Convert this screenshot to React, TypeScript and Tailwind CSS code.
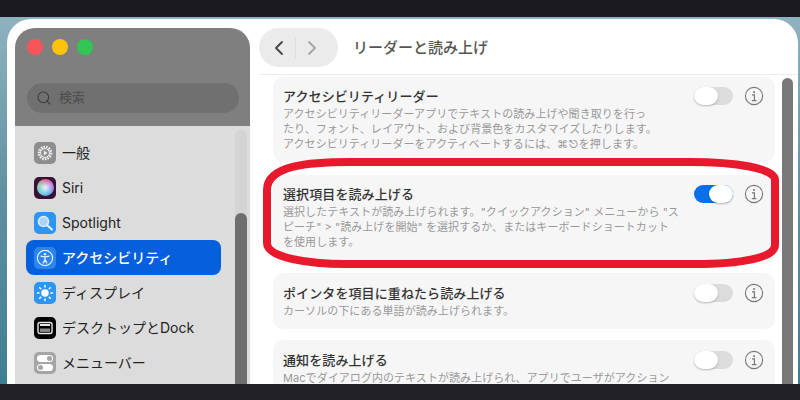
import { ChevronLeft, ChevronRight, Search, Sun } from "lucide-react"

const FONT = "font-['Inter','Noto_Sans_CJK_JP',sans-serif]"

function InfoIcon() {
    return (
        <svg width="20" height="20" viewBox="0 0 20 20" fill="none" stroke="#777" className="shrink-0">
            <circle cx="10" cy="10" r="8.6" strokeWidth="1.1" />
            <circle cx="10" cy="5.9" r="1" fill="#777" stroke="none" />
            <path d="M8 8.8h2.4v5.6M7.8 14.6h4.6" strokeWidth="1.2" />
        </svg>
    )
}

function Toggle({ on = false }: { on?: boolean }) {
    return (
        <div className={`flex h-[18px] w-[39px] items-center rounded-full ${on ? "justify-end bg-[#0a6fe8]" : "justify-start bg-[#dcdcdc]"}`}>
            <div className="h-[18px] w-[24px] rounded-full bg-white shadow-[0_1px_2px_rgba(0,0,0,0.25)]" />
        </div>
    )
}

function SettingCard({ title, lines, on, className }: { title: string; lines: string[]; on?: boolean; className: string }) {
    return (
        <div className={`flex shrink-0 justify-between rounded-[10px] bg-[#f6f6f6] pl-[10px] pr-[11px] ${className}`}>
            <div>
                <div className="h-[22px] text-[13px] leading-[22px] font-medium tracking-[0.1px] whitespace-nowrap text-[#333]">{title}</div>
                {lines.map((line) => (
                    <div key={line} className="text-[11px] leading-[15px] tracking-[0.06px] whitespace-nowrap text-[#999]">{line}</div>
                ))}
            </div>
            <div className="flex h-[22px] items-center gap-[11px]">
                <Toggle on={on} />
                <InfoIcon />
            </div>
        </div>
    )
}

function GearIcon() {
    return (
        <div className="flex h-[22px] w-[22px] items-center justify-center rounded-[5px] bg-[#8e8e8e]">
            <svg width="18" height="18" viewBox="0 0 18 18" fill="none" stroke="#eee">
                <circle cx="9" cy="9" r="6" strokeWidth="2.6" strokeDasharray="1.6 1" />
                <circle cx="9" cy="9" r="4.4" strokeWidth="1" />
                <path d="M7.8 6.4 11.4 9 7.8 11.6Z" fill="#eee" stroke="none" />
            </svg>
        </div>
    )
}

function SiriIcon() {
    return (
        <div className="flex h-[22px] w-[22px] items-center justify-center rounded-[5px] bg-[#3a1036]">
            <div className="h-[17px] w-[17px] rounded-full bg-[conic-gradient(#e0457a,#b85fd0,#3fa0e8,#45d0c8,#7fd08a,#e0457a)]">
                <div className="h-full w-full rounded-full bg-[radial-gradient(circle,#e6f4ff_0%,rgba(200,220,255,0.5)_45%,transparent_75%)]" />
            </div>
        </div>
    )
}

function SpotlightIcon() {
    return (
        <div className="flex h-[22px] w-[22px] items-center justify-center rounded-[5px] bg-[#2f95f5]">
            <svg width="18" height="18" viewBox="0 0 18 18" fill="none">
                <circle cx="7.5" cy="7.5" r="5" fill="#a9d4f7" stroke="#dcecfa" strokeWidth="1.6" />
                <path d="m11.5 11.5 4.4 4" stroke="#e4f0fa" strokeWidth="2.2" strokeLinecap="round" />
            </svg>
        </div>
    )
}

function AccessibilityIcon() {
    return (
        <div className="flex h-[22px] w-[22px] items-center justify-center rounded-[5px] bg-[#2a86ee]">
            <svg width="18" height="18" viewBox="0 0 18 18" fill="none" stroke="#e8f2ff">
                <circle cx="9" cy="9" r="7.6" strokeWidth="1.2" />
                <circle cx="9" cy="5.2" r="1.2" fill="#e8f2ff" stroke="none" />
                <path d="M5 7.2c2.6.8 5.4.8 8 0M9 8v2.6M9 10.6l-1.8 3.4M9 10.6l1.8 3.4" strokeWidth="1.3" strokeLinecap="round" />
            </svg>
        </div>
    )
}

function DisplayIcon() {
    return (
        <div className="flex h-[22px] w-[22px] items-center justify-center rounded-[5px] bg-[#2f95f5]">
            <Sun size={18} color="#fff" fill="#fff" strokeWidth={2} />
        </div>
    )
}

function DockIcon() {
    return (
        <div className="flex h-[22px] w-[22px] items-center justify-center rounded-[5px] bg-black">
            <svg width="16" height="14" viewBox="0 0 16 14">
                <rect x="1" y="1.5" width="14" height="11" rx="2" fill="none" stroke="#e8e8e8" strokeWidth="1.4" />
                <rect x="3" y="3" width="10" height="2" fill="#e8e8e8" />
                <rect x="3" y="7.5" width="10" height="3.4" fill="#8a8a8a" />
            </svg>
        </div>
    )
}

function MenuBarIcon() {
    return (
        <div className="flex h-[22px] w-[22px] flex-col items-center justify-center gap-[2px] rounded-[5px] bg-[#a5a5a5]">
            <div className="flex h-[7px] w-[16px] items-center justify-end rounded-full bg-white pr-[1px]">
                <div className="h-[5px] w-[5px] rounded-full bg-[#a5a5a5]" />
            </div>
            <div className="flex h-[7px] w-[16px] items-center rounded-full bg-white pl-[1px]">
                <div className="h-[5px] w-[5px] rounded-full bg-[#a5a5a5]" />
            </div>
        </div>
    )
}

const SIDEBAR = [
    { label: "一般", icon: <GearIcon /> },
    { label: "Siri", icon: <SiriIcon /> },
    { label: "Spotlight", icon: <SpotlightIcon /> },
    { label: "アクセシビリティ", icon: <AccessibilityIcon />, active: true },
    { label: "ディスプレイ", icon: <DisplayIcon /> },
    { label: "デスクトップとDock", icon: <DockIcon /> },
    { label: "メニューバー", icon: <MenuBarIcon /> },
]

export default function App() {
    return (
        <div className={`relative flex h-[400px] w-[800px] flex-col overflow-hidden bg-[#1b1b20] ${FONT}`}>
            <div className="h-[17px] shrink-0 bg-[#1a1a20]" />
            <div className="flex min-h-0 flex-1 bg-[linear-gradient(180deg,#8fb2bf_0%,#5f8fa0_50%,#3f7f92_100%)] pt-[2px] pl-[7px] pr-[2px]">
                <div className="flex min-w-0 flex-1 gap-[9px] overflow-hidden rounded-t-[24px] bg-white pt-[9px] pl-[8px]">
                    <aside className="flex w-[235px] shrink-0 flex-col overflow-hidden rounded-t-[20px] bg-[#dcdcdc]">
                        <div className="h-[98px] shrink-0 bg-[#7f7f7f] pt-[11px] pl-[12px]">
                            <div className="flex gap-[9px]">
                                <div className="h-[16px] w-[16px] rounded-full bg-[#f9545a]" />
                                <div className="h-[16px] w-[16px] rounded-full bg-[#fcc30b]" />
                                <div className="h-[16px] w-[16px] rounded-full bg-[#2fc653]" />
                            </div>
                            <div className="mt-[28px] mr-[11px] flex h-[30px] items-center gap-[7px] rounded-full bg-[#707070] pl-[9px]">
                                <Search size={16} color="#3e3e3e" strokeWidth={1.6} />
                                <span className="text-[13px] text-[#4c4c4c]">検索</span>
                            </div>
                        </div>
                        <div className="flex min-h-0 flex-1 gap-[14px] pl-[11px]">
                            <div className="flex w-[195px] shrink-0 flex-col pt-[9px]">
                                {SIDEBAR.map((item) => (
                                    <div key={item.label} className={`flex h-[35px] shrink-0 items-center gap-[6px] rounded-[8px] pl-[8px] text-[14px] whitespace-nowrap ${item.active ? "bg-[#0660dc] font-medium text-white" : "text-[#222]"}`}>
                                        {item.icon}
                                        <span>{item.label}</span>
                                    </div>
                                ))}
                            </div>
                            <div className="mt-[4px] mr-[3px] flex w-[12px] flex-col justify-end overflow-hidden rounded-t-full bg-[#d4d4d4] pt-[83px]">
                                <div className="flex-1 rounded-t-full bg-[#6e6e6e]" />
                            </div>
                        </div>
                    </aside>
                    <main className="flex min-w-0 flex-1 flex-col">
                        <header className="flex h-[47px] shrink-0 items-start border-b border-[#ececec]">
                            <div className="flex h-[39px] w-[79px] items-center rounded-full bg-[#ebebeb] pl-[8px]">
                                <ChevronLeft size={24} color="#444" strokeWidth={1.8} />
                                <div className="mx-[4px] h-[20px] w-px bg-[#dcdcdc]" />
                                <ChevronRight size={24} color="#a5a5a5" strokeWidth={1.8} />
                            </div>
                            <h1 className="ml-[15px] text-[15px] leading-[39px] font-medium text-[#555]">リーダーと読み上げ</h1>
                        </header>
                        <div className="flex min-h-0 flex-1 gap-[7px] pl-[14px]">
                            <div className="flex w-[502px] shrink-0 flex-col pt-[2px]">
                                <SettingCard
                                    className="h-[85px] pt-[8px]"
                                    title="アクセシビリティリーダー"
                                    lines={[
                                        "アクセシビリティリーダーアプリでテキストの読み上げや聞き取りを行っ",
                                        "たり、フォント、レイアウト、および背景色をカスタマイズしたりします。",
                                        "アクセシビリティリーダーをアクティベートするには、⌘⎋を押します。",
                                    ]}
                                />
                                <SettingCard
                                    className="mt-[13px] h-[89px] pt-[8px]"
                                    on
                                    title="選択項目を読み上げる"
                                    lines={[
                                        "選択したテキストが読み上げられます。\"クイックアクション\" メニューから \"ス",
                                        "ピーチ\" > \"読み上げを開始\" を選択するか、またはキーボードショートカット",
                                        "を使用します。",
                                    ]}
                                />
                                <SettingCard
                                    className="mt-[9px] h-[56px] pt-[9px]"
                                    title="ポインタを項目に重ねたら読み上げる"
                                    lines={["カーソルの下にある単語が読み上げられます。"]}
                                />
                                <SettingCard
                                    className="mt-[11px] h-[56px] pt-[9px]"
                                    title="通知を読み上げる"
                                    lines={["Macでダイアログ内のテキストが読み上げられ、アプリでユーザがアクション"]}
                                />
                            </div>
                            <div className="mt-[3px] w-[11px] shrink-0 rounded-t-full bg-[#787878]" />
                        </div>
                    </main>
                </div>
            </div>
            <div className="h-[16px] shrink-0 bg-[#222226]" />
            {/* hand-drawn annotation over the screenshot */}
            <svg width="800" height="400" viewBox="0 0 800 400" fill="none" className="pointer-events-none absolute inset-0">
                <path
                    d="M350 162C310 162 267 165 267 190L267 243C267 258 310 264 345 264L695 264C740 264 775 258 775 245L775 180C775 168 735 162 690 162Z"
                    stroke="#e8192c"
                    strokeWidth="8"
                />
            </svg>
        </div>
    )
}
